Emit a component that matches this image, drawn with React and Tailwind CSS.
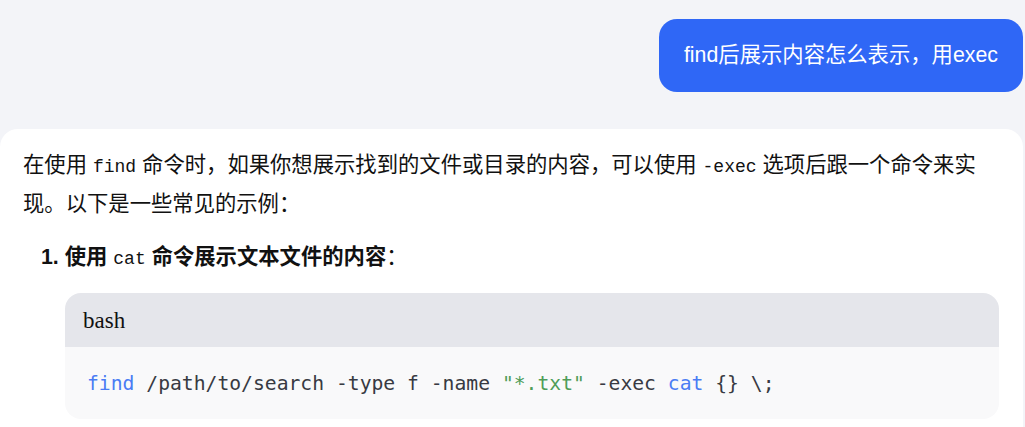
const sans = { fontFamily: '"Liberation Sans", "Noto Sans CJK SC", sans-serif' };

function UserBubble({ text }) {
    return (
        <div className="flex justify-end pt-[19px] pr-[2px]">
            <div className="h-[73px] px-[25px] flex items-center rounded-[18px] bg-[#2f67f6] text-white text-[21.33px]">
                {text}
            </div>
        </div>
    );
}

function CodeBlock() {
    return (
        <div className="mt-[15px] ml-[42px] rounded-[16px] overflow-hidden">
            <div className="h-[54px] flex items-center pl-[18px] bg-[#e5e6eb] text-[23px] text-[#111] font-['Liberation_Serif',serif]">
                bash
            </div>
            <div className="h-[72px] flex items-center pl-[22px] bg-[#f9f9fa] text-[19.7px] text-[#383a42] font-['DejaVu_Sans_Mono',monospace] whitespace-pre">
                <span className="text-[#4a7cf4]">find</span>
                {" /path/to/search -type f -name "}
                <span className="text-[#4f9d58]">"*.txt"</span>
                {" -exec "}
                <span className="text-[#4a7cf4]">cat</span>
                {" {} \\;"}
            </div>
        </div>
    );
}

export default function App() {
    return (
        <div className="w-[1025px] h-[427px] overflow-hidden bg-[#f3f4f8]" style={sans}>
            <UserBubble text="find后展示内容怎么表示，用exec"/>

            <div className="h-[320px] mt-[37px] mr-[2px] bg-white rounded-t-[18px] pt-[18px] pl-[23px] pr-[24px] text-[21.33px] leading-[37px] text-[#111]">
                <p className="pr-[8px]">
                    在使用 <code className="font-['Liberation_Mono',monospace] text-[18px]">find</code> 命令时，如果你想展示找到的文件或目录的内容，可以使用 <code
                    className="font-['Liberation_Mono',monospace] text-[18px]">-exec</code> 选项后跟一个命令来实现。以下是一些常见的示例：
                </p>

                <div className="mt-[16px] pl-[18px] font-bold">
                    1. 使用 <code className="font-['Liberation_Mono',monospace] text-[18px] font-normal">cat</code> 命令展示文本文件的内容<span className="font-normal">：</span>
                </div>

                <CodeBlock/>
            </div>
        </div>
    );
}
